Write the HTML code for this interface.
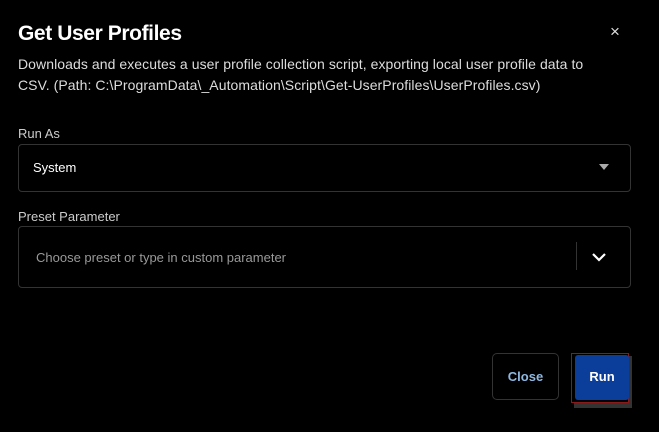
<!DOCTYPE html>
<html><head><style>
body{margin:0;width:659px;height:432px;background:#000;font-family:"Liberation Sans",sans-serif;position:relative;overflow:hidden;color:#fff}
.a{position:absolute}
</style></head><body>
<div class="a" style="left:18px;top:22px;font-size:21px;font-weight:bold;letter-spacing:-0.4px">Get User Profiles</div>
<div class="a" style="left:610px;top:22px;font-size:17px;color:#ddd">×</div>
<div class="a" style="left:18px;top:54px;font-size:14px;line-height:21px;color:#ddd;white-space:nowrap;letter-spacing:0.07px">Downloads and executes a user profile collection script, exporting local user profile data to<br>CSV. (Path: C:\ProgramData\_Automation\Script\Get-UserProfiles\UserProfiles.csv)</div>
<div class="a" style="left:18px;top:126px;font-size:13px;color:#ccc">Run As</div>
<div class="a" style="left:18px;top:144px;width:611px;height:46px;border:1px solid #333;border-radius:4px"></div>
<div class="a" style="left:33px;top:160px;font-size:13px">System</div>
<div class="a" style="left:599px;top:164px;width:0;height:0;border-left:5px solid transparent;border-right:5px solid transparent;border-top:6px solid #aaa"></div>
<div class="a" style="left:18px;top:209px;font-size:13px;color:#ccc">Preset Parameter</div>
<div class="a" style="left:18px;top:226px;width:611px;height:60px;border:1px solid #333;border-radius:4px"></div>
<div class="a" style="left:36px;top:250px;font-size:13px;color:#999">Choose preset or type in custom parameter</div>
<div class="a" style="left:576px;top:242px;width:1px;height:28px;background:#333"></div>
<svg class="a" style="left:590px;top:251px" width="18" height="12"><path d="M3 3l6 6 6-6" stroke="#fff" stroke-width="2.2" fill="none"/></svg>
<div class="a" style="left:492px;top:353px;width:67px;height:47px;border:1px solid #333;border-radius:5px;box-sizing:border-box;color:#8fb8e0;font-size:13px;font-weight:bold;text-align:center;line-height:45px">Close</div>
<div class="a" style="left:574px;top:356px;width:58px;height:52px;background:#333"></div>
<div class="a" style="left:571px;top:353px;width:58px;height:50px;border:1px solid #8a1a1a;box-sizing:border-box;background:#000"></div>
<div class="a" style="left:575px;top:355px;width:54px;height:45px;background:#0b3d9b;border-radius:3px;font-size:13px;font-weight:bold;text-align:center;line-height:43px">Run</div>
</body></html>
